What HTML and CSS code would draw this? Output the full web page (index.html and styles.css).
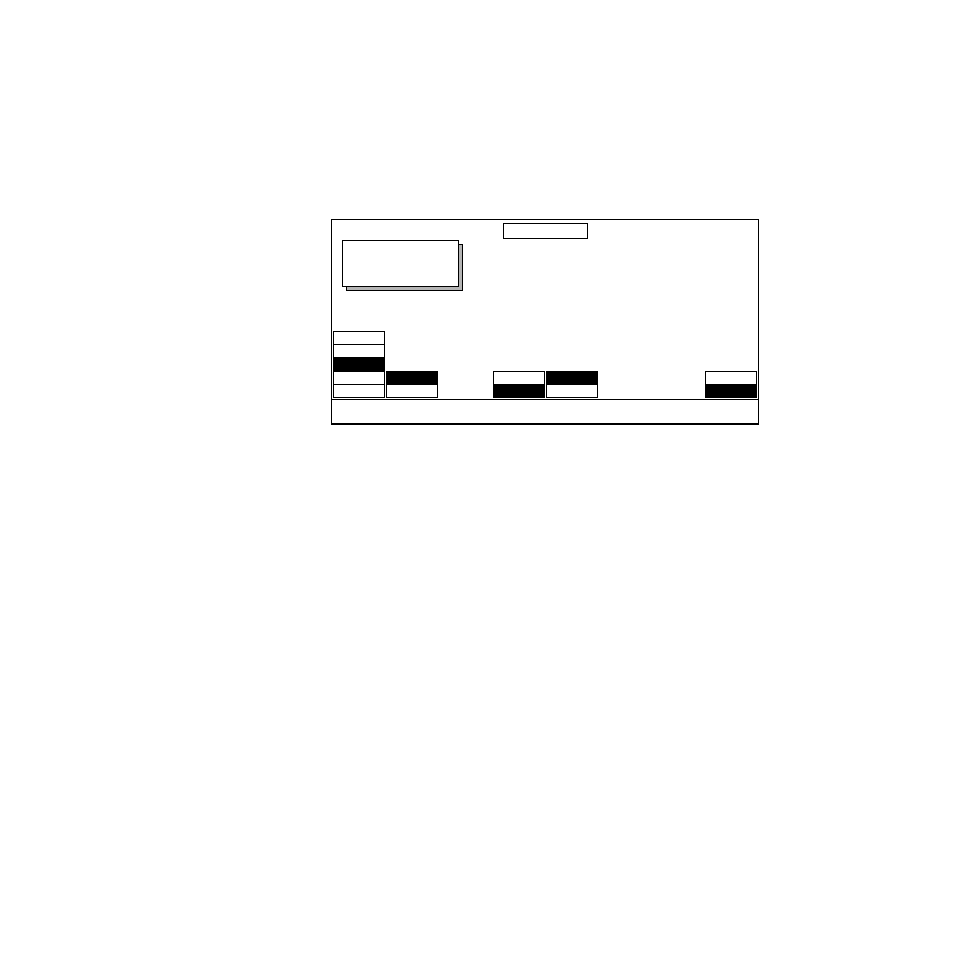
FILE: index.html
```html
<!DOCTYPE html>
<html>
<head>
<meta charset="utf-8">
<link rel="stylesheet" href="styles.css">
</head>
<body>
<div class="frame">
  <div class="stage">
    <div class="title"></div>
    <div class="card"></div>
    <div class="toggles">
      <div class="stack">
        <div class="cell"></div>
        <div class="cell"></div>
        <div class="cell tall on"></div>
        <div class="cell"></div>
        <div class="cell"></div>
      </div>
      <div class="stack">
        <div class="cell on"></div>
        <div class="cell"></div>
      </div>
      <div class="slot"></div>
      <div class="stack">
        <div class="cell"></div>
        <div class="cell on"></div>
      </div>
      <div class="stack">
        <div class="cell on"></div>
        <div class="cell"></div>
      </div>
      <div class="slot"></div>
      <div class="slot"></div>
      <div class="stack">
        <div class="cell"></div>
        <div class="cell on"></div>
      </div>
    </div>
  </div>
  <div class="status"></div>
</div>
</body>
</html>
```

FILE: styles.css
```css
html, body {
  margin: 0;
  padding: 0;
  background: #fff;
  font-family: "Liberation Sans", Arial, sans-serif;
}

.frame {
  box-sizing: border-box;
  width: 428px;
  margin: 219px 0 0 331px;
  border: 1px solid #000;
  border-bottom-width: 2px;
}

.stage {
  height: 179px;
  display: flex;
  flex-direction: column;
  padding: 3px 0 1px 0;
  box-sizing: border-box;
}

.title {
  box-sizing: border-box;
  align-self: center;
  width: 85px;
  height: 16px;
  border: 1px solid #000;
  margin-left: 1px;
}

.card {
  box-sizing: border-box;
  width: 117px;
  height: 47px;
  margin: 1px 0 0 10px;
  border: 1px solid #000;
  background: #fff;
  box-shadow: 4px 4px 0 -1px #b4b4b4, 4px 4px 0 0 #000;
}

.toggles {
  margin-top: auto;
  margin-left: 1px;
  display: grid;
  grid-template-columns: 52px 52px 53px 52px 52px 52px 52px 52px;
  column-gap: 1px;
  align-items: end;
}

.stack {
  border: 1px solid #000;
  display: flex;
  flex-direction: column;
}

.cell {
  height: 12px;
  background: #fff;
}

.cell + .cell {
  border-top: 1px solid #000;
}

.cell.tall {
  height: 13px;
}

.cell.on {
  background: #000;
}

.status {
  height: 23px;
  border-top: 1px solid #000;
}
```
